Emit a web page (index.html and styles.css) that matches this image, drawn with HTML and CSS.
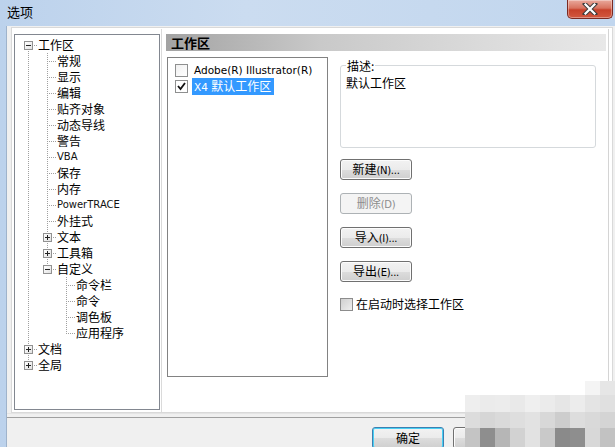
FILE: index.html
```html
<!DOCTYPE html>
<html lang="zh">
<head>
<meta charset="utf-8">
<title>选项</title>
<link rel="stylesheet" href="styles.css">
</head>
<body>
<div class="window">
  <div class="titlebar">
    <span class="title">选项</span>
    <div class="close">
      <svg width="20" height="12" viewBox="0 0 20 12"><path d="M5 1 L15 11 M15 1 L5 11" stroke="#3b3b3b" stroke-width="4.2" stroke-linecap="square"/><path d="M5.5 1.5 L14.5 10.5 M14.5 1.5 L5.5 10.5" stroke="#ffffff" stroke-width="2.2" stroke-linecap="square"/></svg>
    </div>
  </div>
  <div class="client">
    <div class="panel">
      <div class="tree">
        <div class="row"><span class="c rootfirst"><span class="exp minus"></span></span><span class="txt">工作区</span></div>
        <div class="row"><span class="c v"></span><span class="c t"></span><span class="txt">常规</span></div>
        <div class="row"><span class="c v"></span><span class="c t"></span><span class="txt">显示</span></div>
        <div class="row"><span class="c v"></span><span class="c t"></span><span class="txt">编辑</span></div>
        <div class="row"><span class="c v"></span><span class="c t"></span><span class="txt">贴齐对象</span></div>
        <div class="row"><span class="c v"></span><span class="c t"></span><span class="txt">动态导线</span></div>
        <div class="row"><span class="c v"></span><span class="c t"></span><span class="txt">警告</span></div>
        <div class="row"><span class="c v"></span><span class="c t"></span><span class="txt lat">VBA</span></div>
        <div class="row"><span class="c v"></span><span class="c t"></span><span class="txt">保存</span></div>
        <div class="row"><span class="c v"></span><span class="c t"></span><span class="txt">内存</span></div>
        <div class="row"><span class="c v"></span><span class="c t"></span><span class="txt lat">PowerTRACE</span></div>
        <div class="row"><span class="c v"></span><span class="c t"></span><span class="txt">外挂式</span></div>
        <div class="row"><span class="c v"></span><span class="c t"><span class="exp plus"></span></span><span class="txt">文本</span></div>
        <div class="row"><span class="c v"></span><span class="c t"><span class="exp plus"></span></span><span class="txt">工具箱</span></div>
        <div class="row"><span class="c v"></span><span class="c l"><span class="exp minus"></span></span><span class="txt">自定义</span></div>
        <div class="row"><span class="c v"></span><span class="c"></span><span class="c t"></span><span class="txt">命令栏</span></div>
        <div class="row"><span class="c v"></span><span class="c"></span><span class="c t"></span><span class="txt">命令</span></div>
        <div class="row"><span class="c v"></span><span class="c"></span><span class="c t"></span><span class="txt">调色板</span></div>
        <div class="row"><span class="c v"></span><span class="c"></span><span class="c l"></span><span class="txt">应用程序</span></div>
        <div class="row"><span class="c t"><span class="exp plus"></span></span><span class="txt">文档</span></div>
        <div class="row"><span class="c l"><span class="exp plus"></span></span><span class="txt">全局</span></div>
      </div>
      <div class="page">
        <div class="page-header">工作区</div>
        <div class="page-body">
          <div class="list">
            <div class="item"><span class="chk"></span><span class="itxt lat2">Adobe(R) Illustrator(R)</span></div>
            <div class="item"><span class="chk on"><svg width="9" height="9" viewBox="0 0 9 9"><path d="M1 4 L3.5 7 L8 1" fill="none" stroke="#111" stroke-width="1.8"/></svg></span><span class="itxt sel"><span class="lat2">X4 </span>默认工作区</span></div>
          </div>
          <div class="side">
            <fieldset class="desc">
              <legend>描述:</legend>
              <div class="desc-text">默认工作区</div>
            </fieldset>
            <button class="btn">新建<span class="lat3">(N)...</span></button>
            <button class="btn disabled">删除<span class="lat3">(D)</span></button>
            <button class="btn">导入<span class="lat3">(I)...</span></button>
            <button class="btn">导出<span class="lat3">(E)...</span></button>
            <label class="startup"><span class="chk gray"></span>在启动时选择工作区</label>
          </div>
        </div>
      </div>
    </div>
    <div class="footer">
      <button class="btn ok">确定</button>
      <button class="btn cancel">取消</button>
    </div>
  </div>
  <div class="mosaic">
    <span style="background:#ffffff"></span><span style="background:#ffffff"></span><span style="background:#ffffff"></span><span style="background:#ffffff"></span><span style="background:#ffffff"></span><span style="background:#ffffff"></span><span style="background:#ffffff"></span><span style="background:#ffffff"></span><span style="background:#f4f4f4"></span><span style="background:#e6e6e6"></span>
    <span style="background:#eeeeee"></span><span style="background:#ebebeb"></span><span style="background:#ececec"></span><span style="background:#e9e9e9"></span><span style="background:#efefef"></span><span style="background:#ebebeb"></span><span style="background:#e6e6e6"></span><span style="background:#ececec"></span><span style="background:#e4e4e4"></span><span style="background:#e0e0e0"></span>
    <span style="background:#dcdcdc"></span><span style="background:#d6d6d6"></span><span style="background:#dadada"></span><span style="background:#dedede"></span><span style="background:#e2e2e2"></span><span style="background:#d8d8d8"></span><span style="background:#cdcdcd"></span><span style="background:#dddddd"></span><span style="background:#d9d9d9"></span><span style="background:#d4d4d4"></span>
    <span style="background:#c4c4c4"></span><span style="background:#8e8e8e"></span><span style="background:#b6b6b6"></span><span style="background:#d2d2d2"></span><span style="background:#e2e2e2"></span><span style="background:#c9c9c9"></span><span style="background:#8a8a8a"></span><span style="background:#8e8e8e"></span><span style="background:#d8d8d8"></span><span style="background:#c2c2c2"></span>
  </div>
</div>
</body>
</html>
```
FILE: styles.css
```css
html, body {
  margin: 0;
  padding: 0;
  width: 615px;
  height: 447px;
  overflow: hidden;
}
body {
  font-family: "Noto Sans CJK SC", "DejaVu Sans", sans-serif;
  font-size: 12px;
  color: #000;
}
.window {
  position: relative;
  width: 615px;
  height: 447px;
  display: flex;
  flex-direction: column;
  background: linear-gradient(90deg, #bcd2ec 0%, #cbdcf0 40%, #c1d6ee 100%);
}
.titlebar {
  height: 26px;
  flex: none;
  display: flex;
  align-items: flex-start;
  justify-content: space-between;
}
.title {
  margin: 4px 0 0 7px;
  font-size: 13px;
  line-height: 16px;
  color: #000;
}
.close {
  width: 44px;
  height: 18px;
  margin-right: 2px;
  border: 1px solid #7b2a22;
  border-top: none;
  border-radius: 0 0 5px 5px;
  background: linear-gradient(#e9a99c 0%, #d8735f 45%, #c7412a 55%, #d2583f 100%);
  display: flex;
  align-items: center;
  justify-content: center;
  box-shadow: inset 0 0 0 1px rgba(255,255,255,0.35);
}
.client {
  flex: 1;
  margin-left: 6px;
  background: #f0f0f0;
  display: flex;
  flex-direction: column;
  border-left: 1px solid #9fb3cb;
}
.panel {
  flex: none;
  box-sizing: border-box;
  height: 386px;
  margin: 1px 2px 0 4px;
  background: #ffffff;
  border: 1px solid #d9d9d9;
  display: flex;
  padding: 6px 0 0 2px;
}
.tree {
  flex: none;
  width: 146px;
  border: 1px solid #828790;
  background: #fff;
  padding: 2px 0 0 4px;
  box-sizing: border-box;
  height: 376px;
}
.row {
  display: flex;
  height: 16px;
  align-items: center;
}
.c {
  flex: none;
  width: 19px;
  height: 16px;
  display: flex;
  align-items: center;
  background-repeat: no-repeat;
}
.v {
  background-image: repeating-linear-gradient(to bottom, #a0a0a0 0 1px, transparent 1px 2px);
  background-size: 1px 16px;
  background-position: 9px 0;
}
.t {
  background-image:
    repeating-linear-gradient(to bottom, #a0a0a0 0 1px, transparent 1px 2px),
    repeating-linear-gradient(to right, #a0a0a0 0 1px, transparent 1px 2px);
  background-size: 1px 16px, 9px 1px;
  background-position: 9px 0, 11px 8px;
}
.l {
  background-image:
    repeating-linear-gradient(to bottom, #a0a0a0 0 1px, transparent 1px 2px),
    repeating-linear-gradient(to right, #a0a0a0 0 1px, transparent 1px 2px);
  background-size: 1px 9px, 9px 1px;
  background-position: 9px 0, 11px 8px;
}
.rootfirst {
  background-image:
    repeating-linear-gradient(to bottom, #a0a0a0 0 1px, transparent 1px 2px),
    repeating-linear-gradient(to right, #a0a0a0 0 1px, transparent 1px 2px);
  background-size: 1px 8px, 9px 1px;
  background-position: 9px 8px, 11px 8px;
}
.exp {
  width: 7px;
  height: 7px;
  margin-left: 5px;
  border: 1px solid #919191;
  background-color: #fff;
  background-image: linear-gradient(#222, #222), linear-gradient(135deg, #ffffff, #e2e2e2);
  background-size: 5px 1px, 100% 100%;
  background-position: 1px 3px, 0 0;
  background-repeat: no-repeat;
}
.plus {
  background-image: linear-gradient(#222, #222), linear-gradient(#222, #222), linear-gradient(135deg, #ffffff, #e2e2e2);
  background-size: 5px 1px, 1px 5px, 100% 100%;
  background-position: 1px 3px, 3px 1px, 0 0;
}
.txt {
  line-height: 16px;
  white-space: nowrap;
  font-size: 12px;
}
.lat {
  font-family: "DejaVu Sans", sans-serif;
  font-size: 10px;
  color: #111;
}
.page {
  flex: 1;
  margin-left: 1px;
  border-left: 1px solid #dadada;
  border-right: 1px solid #d4d4d4;
  margin-right: 3px;
  margin-top: -5px;
  padding: 5px 2px 0 4px;
  display: flex;
  flex-direction: column;
}
.page-header {
  height: 17px;
  line-height: 17px;
  padding-left: 5px;
  font-weight: bold;
  font-size: 13px;
  background: linear-gradient(90deg, #a3a3a3 0%, #c9c9c9 35%, #e8e8e8 100%);
}
.page-body {
  display: flex;
  padding-top: 6px;
  padding-left: 1px;
}
.list {
  width: 161px;
  height: 320px;
  box-sizing: border-box;
  border: 1px solid #828282;
  background: #fff;
  padding: 4px 0 0 7px;
  flex: none;
}
.item {
  display: flex;
  align-items: center;
  height: 16px;
}
.chk {
  width: 11px;
  height: 11px;
  border: 1px solid #8e8f8f;
  background: linear-gradient(135deg, #f0f0f0, #ffffff);
  flex: none;
  display: flex;
  align-items: center;
  justify-content: center;
}
.chk.on { background: #fff; }
.chk.gray { background: linear-gradient(135deg, #cfcfcf, #eeeeee); border-color: #8c8c8c; }
.itxt {
  margin-left: 4px;
  padding: 0 2px;
  line-height: 16px;
  white-space: nowrap;
}
.sel {
  background: #3399ff;
  color: #fff;
  padding: 0 3px 0 2px;
}
.lat2 {
  font-family: "DejaVu Sans", sans-serif;
  font-size: 10.5px;
}
.lat3 {
  font-family: "DejaVu Sans", sans-serif;
  font-size: 10px;
  letter-spacing: -0.3px;
}
.side {
  margin-left: 12px;
  display: flex;
  flex-direction: column;
  align-items: flex-start;
}
.desc {
  width: 256px;
  height: 89px;
  box-sizing: border-box;
  margin: 2px 0 0 0;
  padding: 0 5px;
  border: 1px solid #d5d9dc;
  border-radius: 3px;
  min-inline-size: 0;
}
.desc legend {
  padding: 0 1px;
  margin-left: 0;
  line-height: 13px;
  font-size: 12px;
}
.desc-text {
  line-height: 15px;
  margin-top: 3px;
}
.btn {
  width: 72px;
  height: 21px;
  padding: 0;
  margin-top: 13px;
  font-family: "Noto Sans CJK SC", sans-serif;
  font-size: 12px;
  line-height: 18px;
  color: #000;
  border: 1px solid #707070;
  border-radius: 3px;
  background: linear-gradient(#f2f2f2 0%, #ebebeb 50%, #dddddd 51%, #cfcfcf 100%);
  box-shadow: inset 0 0 0 1px #fcfcfc;
}
.side .btn:first-of-type { margin-top: 11px; }
.btn.disabled {
  color: #8d8d8d;
  border-color: #adb2b5;
  background: #f4f4f4;
  box-shadow: none;
}
.startup {
  margin-top: 15px;
  display: flex;
  align-items: center;
  gap: 3px;
  line-height: 14px;
}
.footer {
  flex: 1;
  border-top: 1px solid #e4e4e4;
  display: flex;
  align-items: flex-start;
  padding-left: 365px;
  gap: 9px;
  position: relative;
}
.footer::before {
  content: "";
  position: absolute;
  left: 0; right: 0; top: 3px;
  border-top: 1px solid #a0a0a0;
}
.footer .btn {
  margin-top: 13px;
  height: 22px;
}
.btn.ok {
  border-color: #3c7fb1;
  box-shadow: inset 0 0 0 1px #48d0f4;
}
.mosaic {
  position: absolute;
  left: 465px;
  top: 381px;
  width: 150px;
  height: 66px;
  display: grid;
  grid-template-columns: repeat(10, 15px);
  grid-template-rows: 14px 17px 16px 19px;
}
.mosaic span:nth-child(-n+8) { background: transparent !important; }
```
